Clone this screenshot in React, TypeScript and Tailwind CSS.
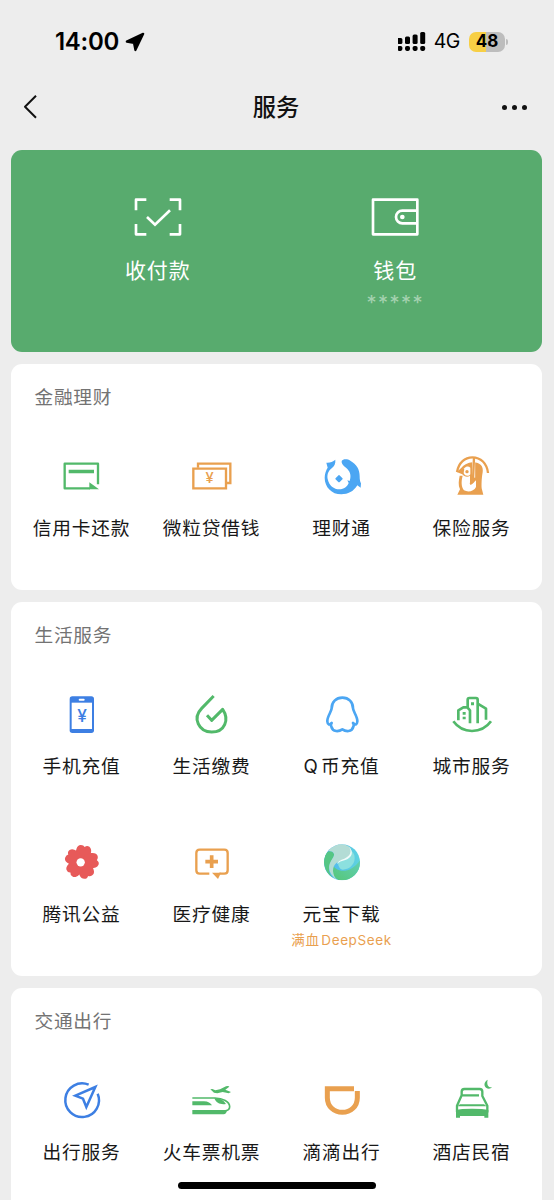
import type { ReactNode } from "react";

type Service = {
  label: string;
  icon: ReactNode;
  caption?: string;
};

const GREEN = "#52b96a";
const ORANGE = "#e9a04f";
const BLUE = "#3d7fe3";
const SKY = "#4ba6f3";

function Icon({ children, viewBox = "2 2 144 144" }: { children: ReactNode; viewBox?: string }) {
  return (
    <svg viewBox={viewBox} className="size-12 shrink-0" fill="none">
      {children}
    </svg>
  );
}

function Yen({ x, y, size, color }: { x: number; y: number; size: number; color: string }) {
  return (
    <text
      x={x}
      y={y}
      fontSize={size}
      fill={color}
      textAnchor="middle"
      className="font-['Inter',sans-serif] font-medium"
    >
      ¥
    </text>
  );
}

function ScanIcon() {
  return (
    <Icon viewBox="0 0 144 144">
      <g stroke="#fff" strokeWidth="8">
        <path d="M6 52V20H37M107 20H138V52M138 93V124H107M37 124H6V93" strokeLinejoin="round" />
        <path d="M39 72L63 95L108 52" />
      </g>
    </Icon>
  );
}

function WalletIcon() {
  return (
    <Icon viewBox="-1 0 144 144">
      <g stroke="#fff" strokeWidth="8" strokeLinejoin="round">
        <path d="M5 20H138V124H5Z" />
        <path d="M138 53H93a19 19 0 0 0 0 38h45" />
      </g>
      <circle cx="93" cy="72" r="7" fill="#fff" />
    </Icon>
  );
}

function CreditCardIcon() {
  return (
    <Icon>
      <path d="M122 96V34H22V108H98" stroke={GREEN} strokeWidth="7" strokeLinejoin="round" />
      <path d="M34 52H110V63H34ZM96 90L125 111H96Z" fill={GREEN} />
    </Icon>
  );
}

function BanknoteIcon() {
  return (
    <Icon>
      <g stroke={ORANGE} strokeWidth="7">
        <path d="M18 49H116V108H18Z" />
        <path d="M32 46V34H129V92H119" />
      </g>
      <Yen x={67} y={93} size={44} color={ORANGE} />
    </Icon>
  );
}

function WealthIcon() {
  return (
    <Icon>
      <path
        d="M27 31C38 32 46 28 54 22C55 34 51 41 44 47C31 57 29 69 31 80C35 100 50 111 66 111C80 111 90 103 94 92L90 84L97 86C103 68 98 56 86 46C76 39 72 33 73 26C77 19 91 20 99 25C118 36 127 50 127 72C127 82 128 88 131 93L130 106L120 99C108 118 92 126 72 126C43 126 22 104 22 76C22 63 27 52 31 46Z"
        fill={SKY}
      />
      <path
        d="M65 70L74 79L65 88L56 79Z"
        fill={SKY}
        stroke={SKY}
        strokeWidth="4"
        strokeLinejoin="round"
      />
    </Icon>
  );
}

function InsuranceIcon() {
  return (
    <Icon>
      <path d="M29 59C34 31 53 15 75 15C100 15 119 33 122 62" stroke={ORANGE} strokeWidth="7" />
      <path
        d="M75 30C98 29 109 42 106 60C104 70 102 90 103 108L108 127H30L38 111C32 98 34 85 37 70H46C41 88 42 104 50 114C62 121 80 117 86 104V84L77 93H68V70C60 76 50 72 45 66L28 59C38 53 45 41 55 36C62 32 69 30 75 30Z"
        fill={ORANGE}
      />
      <path d="M51 48C56 41 64 41 69 46V66C64 73 53 72 49 63Z" fill="#fff" />
      <circle cx="59" cy="58" r="5" fill={ORANGE} />
      <path d="M79 26V76" stroke="#fff" strokeWidth="9" />
      <path d="M80 15L77 84Q76 92 68 95" stroke={ORANGE} strokeWidth="7" />
    </Icon>
  );
}

function PhoneIcon() {
  return (
    <Icon>
      <rect x="37" y="18" width="73" height="110" rx="8" fill={BLUE} />
      <path d="M43 37H104V116H43Z" fill="#fff" />
      <rect x="64" y="25" width="18" height="6" rx="3" fill="#fff" />
      <Yen x={74} y={96} size={52} color={BLUE} />
    </Icon>
  );
}

function UtilityIcon() {
  return (
    <Icon>
      <path
        d="M79 17L43 54C14 84 35 125 73 125C112 125 127 88 106 57L73 90L59 75"
        stroke={GREEN}
        strokeWidth="9"
        strokeLinejoin="round"
      />
    </Icon>
  );
}

function QCoinIcon() {
  return (
    <Icon>
      <path
        d="M75 22C94 22 107 35 107 54C107 63 121 79 120 93C119 104 114 105 107 98C110 101 110 105 108 109C104 126 85 124 75 117C65 124 46 126 42 109C40 105 40 101 43 98C36 105 31 104 30 93C29 79 43 63 43 54C43 35 56 22 75 22Z"
        stroke={SKY}
        strokeWidth="8"
        strokeLinejoin="round"
      />
    </Icon>
  );
}

function CityIcon() {
  return (
    <Icon>
      <g stroke={GREEN} strokeWidth="8" strokeLinejoin="round">
        <path d="M33 90V60L48 51H60L68 60V99" />
        <path d="M61 51V28Q61 23 66 23H86Q91 23 91 28V99M91 40L116 55V88" />
        <path d="M18 93C34 115 52 122 74 122C96 122 115 115 131 93" />
      </g>
      <path d="M71 36H80V45H71ZM46 65H55V73H46ZM46 79H55V87H46Z" fill={GREEN} />
    </Icon>
  );
}

const petals = [10, 82, 154, 226, 298];

function CharityIcon() {
  return (
    <Icon>
      {petals.map((angle) => (
        <path
          key={angle}
          transform={`translate(73 71) rotate(${angle})`}
          d="M0 6L-20 -15C-25 -31 -23 -49 -11 -50Q-3 -51 1 -46Q7 -53 15 -49C26 -42 23 -28 20 -15Z"
          fill="#e75a59"
        />
      ))}
      <circle cx="70" cy="72" r="12.5" fill="#fff" />
    </Icon>
  );
}

function HealthIcon() {
  return (
    <Icon>
      <path
        d="M66 106H37Q27 106 27 96V44Q27 34 37 34H111Q121 34 121 44V96Q121 106 111 106H96"
        stroke={ORANGE}
        strokeWidth="7"
      />
      <path d="M74 103H101L92 122Z" fill={ORANGE} />
      <path d="M54 70H92M73 51V89" stroke={ORANGE} strokeWidth="11" />
    </Icon>
  );
}

function YuanbaoIcon() {
  return (
    <Icon>
      <defs>
        <linearGradient id="ball" x1="0" y1="0" x2="1" y2="0">
          <stop offset="0" stopColor="#4fb4f2" />
          <stop offset="1" stopColor="#5fd3df" />
        </linearGradient>
        <linearGradient id="leaf" x1="0" y1="1" x2="1" y2="0">
          <stop offset="0" stopColor="#55c677" />
          <stop offset="1" stopColor="#62d0b5" />
        </linearGradient>
        <clipPath id="ball-clip">
          <circle cx="74" cy="72" r="54" />
        </clipPath>
      </defs>
      <g clipPath="url(#ball-clip)">
        <path d="M20 18H128V126H20Z" fill="url(#ball)" />
        <path d="M45 78C56 104 100 108 128 66V126H64C46 116 42 96 45 78Z" fill="url(#leaf)" />
        <path d="M19 58C26 36 46 34 50 48C51 60 31 75 36 101C39 112 45 119 54 125C32 114 16 86 19 58Z" fill="#55c684" />
        <path d="M62 58C66 28 98 20 111 50C117 74 98 94 76 94C64 92 60 76 62 58Z" fill="#8ce0df" />
        <path d="M30 38C42 14 78 12 96 26C108 38 102 56 84 62C62 69 47 76 47 98C48 110 53 120 60 126C40 112 33 96 36 80C40 64 52 56 50 46C47 38 38 37 30 38Z" fill="#b3dcd5" />
        <path d="M93 24C106 38 99 54 81 61C69 65 61 70 58 78C64 70 74 68 84 65C105 58 111 40 93 24Z" fill="#f0fbfa" />
      </g>
    </Icon>
  );
}

function TravelIcon() {
  return (
    <Icon>
      <g stroke={BLUE} strokeWidth="7.5">
        <path d="M94 25A50.5 50.5 0 1 0 121 52" />
        <path d="M114 32L54 58L77 67L87 92Z" />
      </g>
    </Icon>
  );
}

function TrainIcon() {
  return (
    <Icon>
      <path d="M15 65H83C106 65 127 77 127 91C127 99 121 103 111 104" stroke={GREEN} strokeWidth="5" />
      <path d="M15 101H119Q117 114 109 114H15ZM15 75H50C62 75 70 80 74 87H15Z" fill={GREEN} />
      <path d="M81 66C98 63 109 72 116 83C100 85 87 82 81 66Z" fill={GREEN} />
      <path
        d="M69 39L75 38L84 42L98 39L116 30Q124 27 126 31L114 40L131 47L124 51L106 47L90 51L80 49Z"
        fill={GREEN}
      />
    </Icon>
  );
}

function DidiIcon() {
  return (
    <Icon>
      <path
        d="M110 37H30V64C30 90 50 108 75 108C100 108 120 90 120 64V44"
        stroke={ORANGE}
        strokeWidth="15"
      />
    </Icon>
  );
}

function HotelIcon() {
  return (
    <Icon>
      <path
        d="M43 60V46Q43 38 51 38H97Q105 38 105 46V59L120 88V106H29V88L43 57H95"
        stroke={GREEN}
        strokeWidth="7"
        strokeLinejoin="round"
      />
      <path d="M38 84H110L118 90H30Z" fill={GREEN} />
      <path d="M26 101Q40 97 74 97Q108 97 123 101V124H111V119H38V124H26Z" fill={GREEN} />
      <path d="M121 10C111 15 108 27 116 34C122 39 130 38 134 33C123 34 117 25 121 10Z" fill={GREEN} />
    </Icon>
  );
}

const finance: Service[] = [
  { label: "信用卡还款", icon: <CreditCardIcon /> },
  { label: "微粒贷借钱", icon: <BanknoteIcon /> },
  { label: "理财通", icon: <WealthIcon /> },
  { label: "保险服务", icon: <InsuranceIcon /> },
];

const life: Service[] = [
  { label: "手机充值", icon: <PhoneIcon /> },
  { label: "生活缴费", icon: <UtilityIcon /> },
  { label: "Q\u200a币充值", icon: <QCoinIcon /> },
  { label: "城市服务", icon: <CityIcon /> },
  { label: "腾讯公益", icon: <CharityIcon /> },
  { label: "医疗健康", icon: <HealthIcon /> },
  { label: "元宝下载", icon: <YuanbaoIcon />, caption: "满血\u200aDeepSeek" },
];

const transport: Service[] = [
  { label: "出行服务", icon: <TravelIcon /> },
  { label: "火车票机票", icon: <TrainIcon /> },
  { label: "滴滴出行", icon: <DidiIcon /> },
  { label: "酒店民宿", icon: <HotelIcon /> },
];

function StatusBar() {
  return (
    <div className="flex h-[83px] items-center justify-between pl-[55px] pr-[46px] text-black">
      <div className="flex items-center gap-[6px]">
        <span className="text-[24px] leading-none font-semibold tracking-[-0.3px]">14:00</span>
        <svg viewBox="0 0 20 20" className="size-5" fill="currentColor">
          <path
            d="M18.2 1.8L10.4 18L9 11L1.8 9.6Z"
            stroke="currentColor"
            strokeWidth="2.2"
            strokeLinejoin="round"
          />
        </svg>
      </div>
      <div className="flex items-center">
        <svg viewBox="0.6 0.3 28 20" className="h-5 w-7" fill="currentColor">
          <rect x="0" y="6.2" width="5" height="6" rx="1.5" />
          <rect x="7.6" y="4.8" width="5" height="7.4" rx="1.5" />
          <rect x="15.2" y="2.8" width="5" height="9.4" rx="1.5" />
          <rect x="22.8" y="0.3" width="5" height="11.9" rx="1.5" />
          <rect x="0" y="14.2" width="5" height="5" rx="1.8" />
          <rect x="7.6" y="14.2" width="5" height="5" rx="1.8" />
          <rect x="15.2" y="14.2" width="5" height="5" rx="1.8" />
          <rect x="22.8" y="14.2" width="5" height="5" rx="1.8" />
        </svg>
        <span className="ml-2 pt-px text-[19.5px] leading-none tracking-[-0.4px]">4G</span>
        <div className="ml-[9px] flex h-5 w-9 items-center justify-center rounded-[7px] bg-linear-to-r from-[#f7cf45] from-48% to-[#bdbdbd] to-48%">
          <span className="text-[17px] leading-none font-bold">48</span>
        </div>
        <div className="ml-px h-[6px] w-[2px] rounded-r-full bg-[#bdbdbd]" />
      </div>
    </div>
  );
}

function NavBar() {
  return (
    <div className="flex h-12 items-center justify-between pl-[23px] pr-[27px] text-[#111]">
      <svg viewBox="0 0 16 26" className="h-[26px] w-4" fill="none" stroke="currentColor" strokeWidth="2">
        <path d="M13 1.7L2 12.7L13 23.7" strokeLinejoin="round" />
      </svg>
      <h1 className="ml-[11px] pt-[2px] text-[23.3px] leading-none font-medium">服务</h1>
      <div className="flex gap-[5px]">
        <span className="size-[5px] rounded-full bg-[#111]" />
        <span className="size-[5px] rounded-full bg-[#111]" />
        <span className="size-[5px] rounded-full bg-[#111]" />
      </div>
    </div>
  );
}

function ServiceSection({ title, items }: { title: string; items: Service[] }) {
  return (
    <section className="rounded-[11px] bg-white px-[5.5px] pt-[19px] pb-[47px]">
      <h2 className="pl-[18px] text-[18.7px] leading-[30px] tracking-[0.7px] text-[#737373]">{title}</h2>
      <div className="mt-10 grid grid-cols-4 gap-y-[58px]">
        {items.map((item) => (
          <div key={item.label} className="flex h-[90px] flex-col items-center">
            {item.icon}
            <span className="mt-[13px] shrink-0 text-[18.7px] leading-[30px] tracking-[0.8px] whitespace-nowrap text-[#181818]">
              {item.label}
            </span>
            {item.caption && (
              <span className="-mt-px shrink-0 text-[13.5px] leading-[22px] tracking-[0.6px] whitespace-nowrap text-[#e9a04f]">
                {item.caption}
              </span>
            )}
          </div>
        ))}
      </div>
    </section>
  );
}

export default function App() {
  return (
    <div className="relative h-[1200px] w-[554px] overflow-hidden bg-[#ededed] font-['Inter','Noto_Sans_CJK_SC',sans-serif]">
      <StatusBar />
      <NavBar />
      <main className="mt-[19px] flex flex-col gap-3 pr-3 pl-[11px]">
        <div className="grid h-[202px] grid-cols-2 rounded-[11px] bg-[#58ab6e] px-7 pt-[43px] text-white">
          <div className="flex flex-col items-center">
            <ScanIcon />
            <span className="mt-[15px] text-[21px] leading-[30px] tracking-[0.9px]">收付款</span>
          </div>
          <div className="flex flex-col items-center">
            <WalletIcon />
            <span className="mt-[15px] text-[21px] leading-[30px] tracking-[0.9px]">钱包</span>
            <span className="mt-[5px] text-[20px] leading-6 tracking-[1.5px] text-[#a6d2b1]">*****</span>
          </div>
        </div>
        <ServiceSection title="金融理财" items={finance} />
        <ServiceSection title="生活服务" items={life} />
        <ServiceSection title="交通出行" items={transport} />
      </main>
      <div className="absolute bottom-[11px] left-[178px] h-[7px] w-[198px] rounded-full bg-black" />
    </div>
  );
}
